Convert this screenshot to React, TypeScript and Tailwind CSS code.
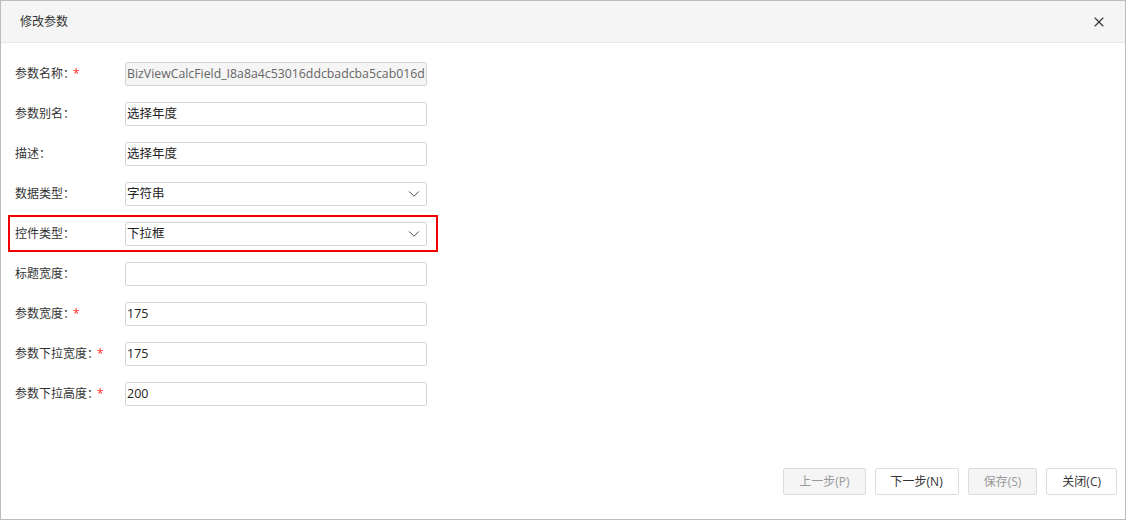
import { ChevronDown, X } from "lucide-react";

const FONT = { fontFamily: '"Open Sans", "Noto Sans CJK SC", sans-serif' };

type Field = {
  label: string;
  required?: boolean;
  value: string;
  kind?: "text" | "select" | "disabled";
  highlight?: boolean;
};

const FIELDS: Field[] = [
  { label: "参数名称：", required: true, value: "BizViewCalcField_I8a8a4c53016ddcbadcba5cab016d", kind: "disabled" },
  { label: "参数别名：", value: "选择年度" },
  { label: "描述：", value: "选择年度" },
  { label: "数据类型：", value: "字符串", kind: "select" },
  { label: "控件类型：", value: "下拉框", kind: "select", highlight: true },
  { label: "标题宽度：", value: "" },
  { label: "参数宽度：", required: true, value: "175" },
  { label: "参数下拉宽度：", required: true, value: "175" },
  { label: "参数下拉高度：", required: true, value: "200" },
];

function FormRow({ f }: { f: Field }) {
  const box =
    f.kind === "disabled"
      ? "bg-[#f5f5f5] text-[#666] text-[12.3px] pr-0"
      : "bg-white text-[#222] text-[12.5px] pr-[3px]";
  return (
    <div className="relative flex h-[24px] items-center">
      {f.highlight && (
        <div className="pointer-events-none absolute left-[-7px] top-[-7px] h-[37px] w-[430px] border-2 border-[#f00000]" />
      )}
      <div className="flex w-[110px] items-center text-[12px] text-[#333]">
        <span>{f.label}</span>
        {f.required && <span className="-ml-[2px] text-[#ff2a2a]">*</span>}
      </div>
      <div
        className={`flex h-[24px] w-[302px] items-center overflow-hidden whitespace-nowrap rounded-[2px] border border-[#d4d4d4] pl-[1px] ${box}`}
      >
        <span className="flex-1 overflow-hidden">{f.value}</span>
        {f.kind === "select" && (
          <ChevronDown className="h-[18px] w-[18px] text-[#444]" strokeWidth={1.3} />
        )}
      </div>
    </div>
  );
}

function Btn({ label, disabled }: { label: string; disabled?: boolean }) {
  return (
    <button
      className={`h-[27px] rounded-[2px] border border-[#dcdcdc] px-[15px] text-[12px] ${
        disabled ? "bg-[#f5f5f5] text-[#999]" : "bg-white text-[#333]"
      }`}
    >
      {label}
    </button>
  );
}

export default function App() {
  return (
    <div
      className="flex h-[520px] w-[1126px] flex-col border border-[#bcbcbc] bg-white"
      style={FONT}
    >
      <div className="flex h-[42px] shrink-0 items-center justify-between border-b border-[#e8e8e8] bg-[#f5f5f5] pl-[19px] pr-[18px]">
        <span className="text-[12px] text-[#333]">修改参数</span>
        <X className="h-[16px] w-[16px] text-[#333]" strokeWidth={1.6} />
      </div>
      <div className="flex flex-1 flex-col gap-[16px] pl-[14px] pt-[19px]">
        {FIELDS.map((f) => (
          <FormRow key={f.label} f={f} />
        ))}
      </div>
      <div className="flex justify-end gap-[9px] pb-[24px] pr-[8px]">
        <Btn label="上一步(P)" disabled />
        <Btn label="下一步(N)" />
        <Btn label="保存(S)" disabled />
        <Btn label="关闭(C)" />
      </div>
    </div>
  );
}
